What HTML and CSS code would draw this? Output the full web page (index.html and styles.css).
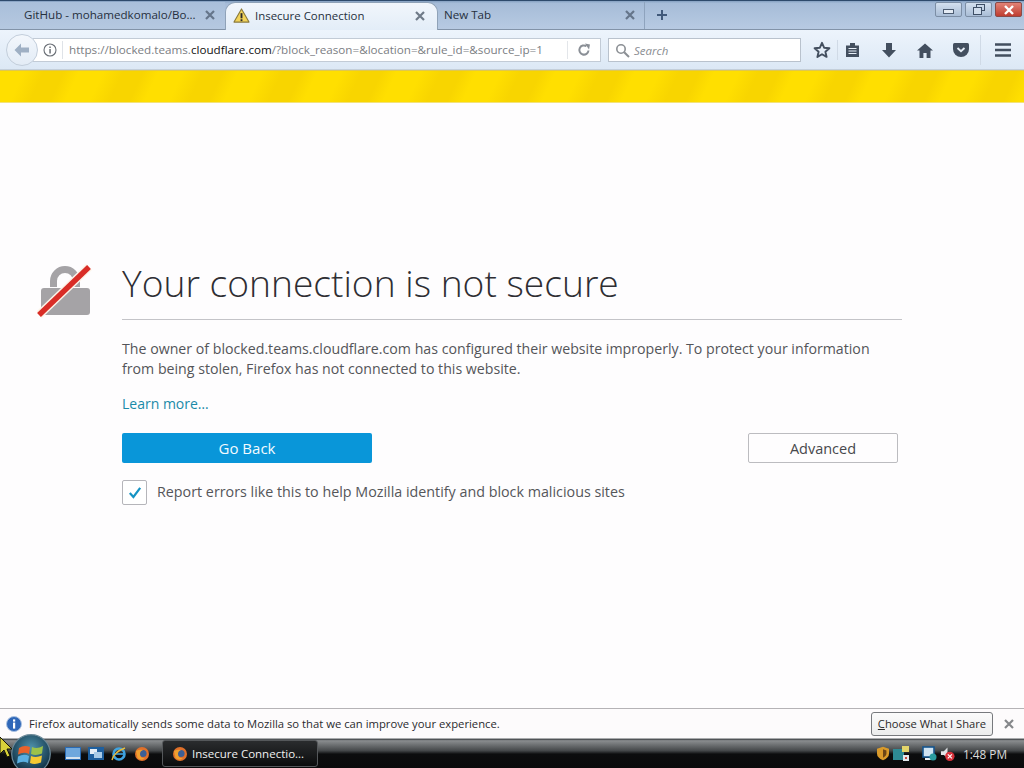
FILE: index.html
```html
<!DOCTYPE html>
<html lang="en">
<head>
<meta charset="utf-8">
<title>Insecure Connection</title>
<link rel="stylesheet" href="styles.css">
</head>
<body>
<div class="app">
  <header class="tabstrip">
    <div class="tab tab-first"><span class="tab-label">GitHub - mohamedkomalo/Bo...</span><svg class="tab-x" width="10" height="10" viewBox="0 0 10 10"><path d="M1 1l8 8M9 1l-8 8" stroke="#65758a" stroke-width="2.2"/></svg></div>
    <div class="tab tab-active">
      <svg class="tab-warn" width="17" height="15" viewBox="0 0 18 16"><path d="M9 1 L17 15 H1 Z" fill="#f2d35a" stroke="#8a7a3a" stroke-width="1.2" stroke-linejoin="round"/><rect x="8" y="5.5" width="2" height="5.5" fill="#2b2b2b"/><rect x="8" y="12" width="2" height="2" fill="#2b2b2b"/></svg>
      <span class="tab-label">Insecure Connection</span><svg class="tab-x" width="10" height="10" viewBox="0 0 10 10"><path d="M1 1l8 8M9 1l-8 8" stroke="#6f7a88" stroke-width="2.2"/></svg>
    </div>
    <div class="tab tab-new"><span class="tab-label">New Tab</span><svg class="tab-x" width="10" height="10" viewBox="0 0 10 10"><path d="M1 1l8 8M9 1l-8 8" stroke="#65758a" stroke-width="2.2"/></svg></div>
    <div class="tab-plus">
      <svg width="12" height="12" viewBox="0 0 12 12"><path d="M6 1v10M1 6h10" stroke="#41597a" stroke-width="2"/></svg>
    </div>
    <div class="winbtns">
      <div class="winbtn"><span class="win-min"></span></div>
      <div class="winbtn"><svg width="12" height="11" viewBox="0 0 12 11"><rect x="3.5" y=".5" width="8" height="6" fill="none" stroke="#3e4f66"/><rect x=".5" y="3.5" width="8" height="7" fill="#cfdcec" stroke="#3e4f66"/></svg></div>
      <div class="winbtn winbtn-close"><svg width="12" height="10" viewBox="0 0 12 10"><path d="M2 1l8 8M10 1L2 9" stroke="#fff" stroke-width="2.4"/></svg></div>
    </div>
  </header>

  <nav class="navbar">
    <div class="back">
      <svg width="18" height="16" viewBox="0 0 18 16"><path d="M8 1.5 L1.5 8 L8 14.5 V10.5 H16 V5.5 H8 Z" fill="#9fb0c4"/></svg>
    </div>
    <div class="urlbar">
      <svg class="url-info" width="14" height="14" viewBox="0 0 14 14"><circle cx="7" cy="7" r="6" fill="none" stroke="#6a6f76" stroke-width="1.1"/><rect x="6.3" y="6" width="1.5" height="4.5" fill="#6a6f76"/><rect x="6.3" y="3.5" width="1.5" height="1.5" fill="#6a6f76"/></svg>
      <span class="url-text">https://blocked.teams.<b>cloudflare.com</b>/?block_reason=&amp;location=&amp;rule_id=&amp;source_ip=1</span>
      <span class="url-reload">
        <svg width="14" height="14" viewBox="0 0 14 14"><path d="M11.5 7.5 A4.6 4.6 0 1 1 9.5 3.2" fill="none" stroke="#8a8f96" stroke-width="2"/><path d="M8 .5 L13 1.5 L12 6.5 Z" fill="#8a8f96"/></svg>
      </span>
    </div>
    <div class="searchbar">
      <svg width="15" height="15" viewBox="0 0 15 15"><circle cx="6" cy="6" r="4.2" fill="none" stroke="#8b8f94" stroke-width="1.6"/><path d="M9.2 9.2 L14 14" stroke="#8b8f94" stroke-width="2"/></svg>
      <span class="search-text">Search</span>
    </div>
    <div class="tools">
      <svg class="tool tool-star" width="18" height="18" viewBox="0 0 18 18"><path d="M9 1.8 L11.1 6.7 L16.4 7.2 L12.4 10.7 L13.6 15.9 L9 13.2 L4.4 15.9 L5.6 10.7 L1.6 7.2 L6.9 6.7 Z" fill="none" stroke="#434f5f" stroke-width="1.9" stroke-linejoin="round"/></svg>
      <span class="tool-sep"></span>
      <svg class="tool tool-list" width="15" height="16" viewBox="0 0 15 16"><path d="M1 3.5 H5 V1 H10 V3.5 H14 V15 H1 Z" fill="#434f5f"/><path d="M3.5 6.5h8M3.5 9h8M3.5 11.5h8" stroke="#e6eef7" stroke-width="1.1"/></svg>
      <svg class="tool tool-down" width="16" height="16" viewBox="0 0 16 16"><path d="M5 1 H11 V8 H15 L8 15.5 L1 8 H5 Z" fill="#434f5f"/></svg>
      <svg class="tool tool-home" width="16" height="15" viewBox="0 0 16 15"><path d="M8 .5 L16 7.5 H13.5 V15 H9.6 V10 H6.4 V15 H2.5 V7.5 H0 Z" fill="#434f5f"/></svg>
      <svg class="tool tool-pocket" width="16" height="14" viewBox="0 0 16 14"><path d="M1.5 0 H14.5 Q16 0 16 1.5 V6 A8 8 0 0 1 0 6 V1.5 Q0 0 1.5 0 Z" fill="#434f5f"/><path d="M4.5 5 L8 8.2 L11.5 5" fill="none" stroke="#e6eef7" stroke-width="1.9"/></svg>
      <span class="tool-sep tool-sep-wide"></span>
      <svg class="tool tool-menu" width="16" height="14" viewBox="0 0 16 14"><path d="M0 1.5h16M0 7h16M0 12.5h16" stroke="#434f5f" stroke-width="2.4"/></svg>
    </div>
  </nav>

  <div class="hazard"></div>

  <main class="page">
    <svg class="lock" width="56" height="56" viewBox="0 0 56 56">
      <path d="M13 24 V18 A15 15 0 0 1 43 18 V24 H36 V18 A8 8 0 0 0 20 18 V24 Z" fill="#a5a3a6"/>
      <rect x="4" y="25" width="49" height="27" rx="3" fill="#a5a3a6"/>
      <path d="M2 52 L52 4" stroke="#fdf3e8" stroke-width="8.5"/>
      <path d="M2 52 L52 4" stroke="#d92d27" stroke-width="5.5"/>
    </svg>
    <section class="errors">
      <h1 class="title">Your connection is not secure</h1>
      <p class="desc">The owner of blocked.teams.cloudflare.com has configured their website improperly. To protect your information from being stolen, Firefox has not connected to this website.</p>
      <a class="learn">Learn more…</a>
      <div class="actions">
        <button class="btn-primary">Go Back</button>
        <button class="btn-secondary">Advanced</button>
      </div>
      <div class="report">
        <span class="check"><svg width="14" height="13" viewBox="0 0 14 13"><path d="M1.8 7 L5.4 11 L12.2 1.8" fill="none" stroke="#1593c4" stroke-width="2.2"/></svg></span>
        <span class="report-label">Report errors like this to help Mozilla identify and block malicious sites</span>
      </div>
    </section>
  </main>

  <aside class="notice">
    <svg class="notice-icon" width="16" height="16" viewBox="0 0 16 16"><circle cx="8" cy="8" r="7.5" fill="#2f67b8"/><circle cx="8" cy="8" r="7.5" fill="none" stroke="#a9c0e0"/><rect x="7" y="6.6" width="2.2" height="6" fill="#fff"/><rect x="7" y="3.4" width="2.2" height="2.2" fill="#fff"/></svg>
    <span class="notice-text">Firefox automatically sends some data to Mozilla so that we can improve your experience.</span>
    <button class="notice-btn"><u>C</u>hoose What I Share</button>
    <svg class="notice-x" width="10" height="10" viewBox="0 0 10 10"><path d="M1 1l8 8M9 1l-8 8" stroke="#85878a" stroke-width="2.2"/></svg>
  </aside>

  <footer class="taskbar">
    <span class="orb">
      <svg width="40" height="40" viewBox="0 0 40 40"><defs><radialGradient id="orbfill" cx="50%" cy="35%" r="65%"><stop offset="0" stop-color="#4f93ad"/><stop offset="1" stop-color="#0d2c40"/></radialGradient></defs><circle cx="20" cy="20" r="19.3" fill="url(#orbfill)" stroke="#6d8a99" stroke-width="1.2"/><path d="M8 14 Q13 10.5 19 13 L18 20 Q13 17.5 7 20.5 Z" fill="#e9622b"/><path d="M21 13 Q26 15.5 32 12 L31 19.5 Q25 22 20 20 Z" fill="#9cc24a"/><path d="M7 22.5 Q13 19.5 18 22 L17 29 Q12 26.5 6 29.5 Z" fill="#5ab0e2"/><path d="M20 22 Q25 24 31 21.5 L30 28.5 Q24 31 19 29 Z" fill="#f6c932"/></svg>
    </span>
    <svg class="cursor" width="13" height="20" viewBox="0 0 13 20"><path d="M0 0 L12 12 H7 L10 19 L7 20 L4 13 L0 17 Z" fill="#d9d23a" stroke="#151505" stroke-width="1"/></svg>
    <div class="quick">
      <svg width="16" height="13" viewBox="0 0 16 13"><rect width="16" height="13" fill="#2a6bb4"/><rect x="1" y="1" width="14" height="9" fill="#6ea7dd"/><rect x="1" y="10" width="14" height="2" fill="#d5e2ee"/></svg>
      <svg width="16" height="13" viewBox="0 0 16 13"><rect width="16" height="13" fill="#1e5f9e"/><rect x="2" y="2" width="7" height="5" fill="#e5eef6"/><rect x="6" y="5" width="8" height="6" fill="#a8cbe8"/></svg>
      <svg width="16" height="16" viewBox="0 0 16 16"><circle cx="8" cy="8" r="5.5" fill="none" stroke="#3fa3e0" stroke-width="2.6"/><path d="M3 8h10" stroke="#3fa3e0" stroke-width="1.6"/><path d="M1 14 Q3 6 14 2" fill="none" stroke="#e8bb3a" stroke-width="1.4"/></svg>
      <svg width="16" height="16" viewBox="0 0 16 16"><circle cx="8" cy="8" r="7" fill="#e0702a"/><circle cx="9" cy="7.5" r="3.6" fill="#3c5f95"/><path d="M2 5 Q6 3 9 4 Q6 5 6 8 Q6 12 11 12.5 Q7 15 3.5 12 Z" fill="#f0a030"/></svg>
    </div>
    <div class="task-item">
      <svg width="16" height="16" viewBox="0 0 16 16"><circle cx="8" cy="8" r="7" fill="#e0702a"/><circle cx="9" cy="7.5" r="3.6" fill="#3c5f95"/><path d="M2 5 Q6 3 9 4 Q6 5 6 8 Q6 12 11 12.5 Q7 15 3.5 12 Z" fill="#f0a030"/></svg>
      <span>Insecure Connectio...</span>
    </div>
    <div class="tray">
      <svg width="12" height="15" viewBox="0 0 14 16"><path d="M7 0 L14 2.5 V8 Q14 13 7 16 Q0 13 0 8 V2.5 Z" fill="#d99a2a"/><path d="M7 3 L11 4.5 V8 Q11 11 7 13 Z" fill="#6b4516"/></svg>
      <svg class="tray-net" width="17" height="16" viewBox="0 0 17 16"><rect y="3" width="11" height="11" fill="#2e8a94"/><rect x="9" width="7" height="6" fill="#e3d46a"/><rect x="10" y="9" width="6" height="6" fill="#e3e8ec"/><rect x="12" y="11" width="2" height="2" fill="#c8483c"/></svg>
      <svg class="tray-pc" width="15" height="16" viewBox="0 0 15 16"><rect x="1" y="1" width="11" height="10" fill="#cfe3f2" stroke="#16568f" stroke-width="1.6"/><rect x="3" y="12" width="8" height="2" fill="#e7eff5"/><circle cx="11" cy="11" r="3.5" fill="#2a9ca0"/></svg>
      <svg class="tray-vol" width="15" height="16" viewBox="0 0 16 16"><path d="M1 5 H4 L8 1 V12 L4 9 H1 Z" fill="#dfe3e6"/><circle cx="10.5" cy="10.5" r="5" fill="#d7313a"/><path d="M8.3 8.3l4.4 4.4M12.7 8.3l-4.4 4.4" stroke="#fff" stroke-width="1.2"/></svg>
      <span class="clock">1:48 PM</span>
    </div>
  </footer>
</div>
</body>
</html>
```
FILE: styles.css
```css
* { box-sizing: border-box; }
html, body { margin: 0; height: 100%; }
body { font-family: "Open Sans", "Noto Sans", "Liberation Sans", sans-serif; background: #fefdfe; overflow: hidden; }
.app { width: 1024px; height: 768px; display: flex; flex-direction: column; overflow: hidden; }

.tabstrip { height: 30px; flex: none; display: flex; align-items: stretch; padding-top: 1px; background: linear-gradient(#84a0c1 0, #a6bcd8 8%, #b7cae2 100%); border-top: 1px solid #2e4a6c; border-bottom: 1px solid #8293a8; }
.tab { display: flex; align-items: center; font-size: 11.6px; color: #26303d; position: relative; padding-bottom: 2px; }
.tab-label { flex: 1; white-space: nowrap; overflow: hidden; }
.tab-x { flex: none; }
.tab-first { width: 225px; padding-left: 24px; padding-right: 10px; background: linear-gradient(#a9bfda, #b5c8e0); }
.tab-active { width: 213px; padding-left: 7px; padding-right: 12px; gap: 5px; font-size: 11.45px; background: linear-gradient(#f1f6fc, #e3edf8); border-radius: 10px 10px 0 0; margin-bottom: -1px; border: 1px solid #8fa2b8; border-bottom: 0; }
.tab-new { width: 207px; padding-left: 6px; padding-right: 9px; border-right: 1px solid #8ea3bd; }
.tab-plus { width: 34px; display: flex; align-items: center; justify-content: center; padding-bottom: 2px; }
.winbtns { margin-left: auto; margin-right: 2px; display: flex; align-items: flex-start; gap: 3px; margin-top: 0; }
.winbtn { width: 27px; height: 15px; border: 1px solid #7c8ea5; border-radius: 2px; background: linear-gradient(#d3e0ef, #a9bdd6); display: flex; align-items: center; justify-content: center; }
.winbtn-close { background: linear-gradient(#e28276, #bf3d30); border-color: #8a4a48; }
.win-min { width: 11px; height: 5px; border: 1px solid #4c5c72; background: #e4ebf4; margin-top: 3px; }

.navbar { height: 40px; flex: none; display: flex; align-items: center; background: linear-gradient(#edf4fc, #dce8f5); border-bottom: 1px solid #c4cfda; padding-left: 6px; padding-top: 1px; position: relative; }
.back { width: 32px; height: 32px; border-radius: 50%; background: linear-gradient(#f3f7fc, #e3ecf6); border: 1px solid #c3cedb; display: flex; align-items: center; justify-content: center; position: relative; z-index: 1; flex: none; }
.urlbar { margin-left: -5px; width: 568px; height: 24px; background: #fff; border: 1px solid #c2cbd6; border-left: 0; display: flex; align-items: center; padding-left: 10px; font-size: 11.67px; color: #7a7d82; flex: none; }
.url-info { flex: none; }
.url-text { margin-left: 5px; padding-left: 6px; border-left: 1px solid #dfe3e8; line-height: 18px; white-space: nowrap; flex: 1; }
.url-text b { font-weight: 400; color: #111; }
.url-reload { flex: none; width: 33px; height: 18px; border-left: 1px solid #e3e6ea; display: flex; align-items: center; justify-content: center; }
.searchbar { margin-left: 7px; width: 193px; height: 24px; background: #fff; border: 1px solid #b9c2cd; display: flex; align-items: center; padding-left: 6px; gap: 4px; flex: none; }
.search-text { font-size: 11.5px; font-style: italic; color: #8a8d92; }
.tools { display: flex; align-items: center; padding-left: 12px; flex: 1; }
.tool { flex: none; }
.tool-sep { width: 1px; height: 20px; background: #d0dae6; margin: 0 7px 0 6px; }
.tool-list { margin-right: 21px; }
.tool-down { margin-right: 20px; }
.tool-home { margin-right: 20px; }
.tool-sep-wide { height: 30px; margin: 0 0 0 11px; }
.tool-menu { margin-left: 14px; }

.hazard { height: 33px; flex: none; background: repeating-linear-gradient(115deg, #ffdf00 0, #ffdf00 22px, #f8d500 40px, #f8d500 58px, #ffdf00 72px); border-top: 1px solid #dfc84e; border-bottom: 1px solid #f3e27a; }

.page { flex: 1; display: flex; align-items: flex-start; padding: 158px 0 0 37px; background: #fefdfe; }
.lock { flex: none; margin-top: 2px; }
.errors { margin-left: 29px; width: 780px; }
.title { margin: 0; font-size: 37.2px; font-weight: 300; line-height: 44px; height: 59px; color: #2e2e33; border-bottom: 1px solid #c4c4c8; white-space: nowrap; }
.desc { margin: 19px 0 0; font-size: 14.18px; line-height: 20px; color: #545559; width: 760px; }
.learn { display: block; margin-top: 15px; font-size: 14px; line-height: 20px; color: #1a8aa8; }
.actions { margin-top: 19px; display: flex; justify-content: space-between; padding-right: 4px; }
.btn-primary { width: 250px; height: 30px; border: 0; border-radius: 2px; background: #0996d9; color: #f4fbff; font: 400 15px "Open Sans", sans-serif; }
.btn-secondary { width: 150px; height: 30px; border: 1px solid #bcbcc0; border-radius: 2px; background: #fefdfe; color: #47484c; font: 400 14.5px "Open Sans", sans-serif; }
.report { margin-top: 17px; display: flex; align-items: center; gap: 10px; }
.check { width: 25px; height: 25px; border: 1px solid #b5b5ba; border-radius: 2px; display: flex; align-items: center; justify-content: center; background: #fff; }
.report-label { font-size: 14.3px; color: #55565a; padding-bottom: 2px; }

.notice { height: 30px; flex: none; display: flex; align-items: center; background: #fdfbfc; border-top: 1px solid #b5b3b6; padding: 0 10px 0 6px; }
.notice-icon { flex: none; }
.notice-text { margin-left: 7px; font-size: 11.28px; color: #2a2a2e; flex: 1; white-space: nowrap; }
.notice-btn { width: 122px; height: 24px; padding: 0; border: 1px solid #77797d; border-radius: 3px; background: linear-gradient(#fbfbfb, #ececec); color: #2a2a2a; font: 400 11.2px "Open Sans", sans-serif; }
.notice-x { margin-left: 11px; flex: none; }

.taskbar { height: 30px; flex: none; display: flex; align-items: center; position: relative; background: linear-gradient(#3a3d40 0, #8a8d8f 6%, #45484a 40%, #0c0d0e 52%, #0a0a0b 100%); border-top: 1px solid #a9abad; color: #e8e8e8; }
.orb { position: absolute; left: 11px; top: -5px; line-height: 0; }
.cursor { position: absolute; left: 0; top: -2px; }
.quick { margin-left: 65px; display: flex; gap: 7px; align-items: center; width: 90px; }
.task-item { margin-left: 7px; width: 156px; height: 27px; display: flex; align-items: center; gap: 4px; padding-left: 9px; border: 1px solid #55585b; border-radius: 3px; background: linear-gradient(#2a2c2e, #0b0c0d); font-size: 11.5px; white-space: nowrap; color: #f0f0f0; }
.tray { margin-left: auto; margin-right: 17px; display: flex; align-items: center; }
.tray-net { margin-left: 4px; }
.tray-pc { margin-left: 12px; }
.tray-vol { margin-left: 3px; }
.clock { margin-left: 8px; font-size: 11.8px; color: #dcdcdc; }
```
